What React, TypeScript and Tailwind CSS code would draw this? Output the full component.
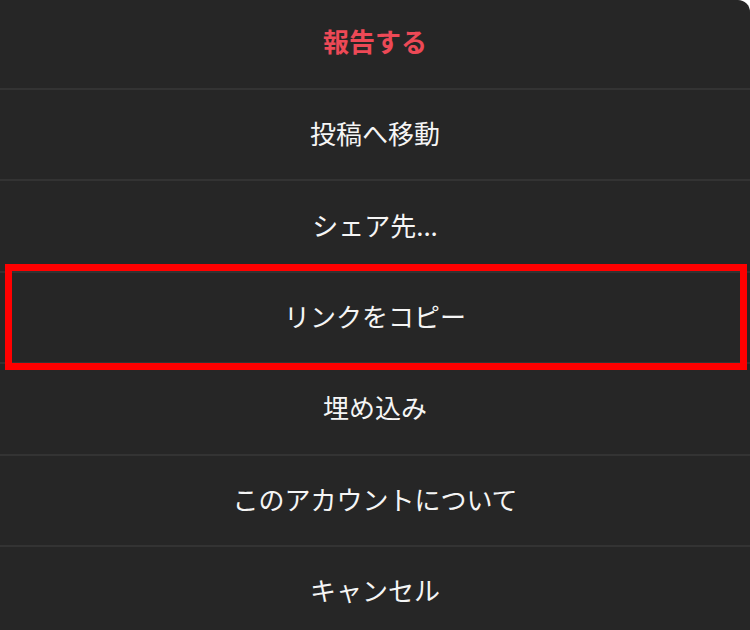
import React from "react";

const items = [
  "投稿へ移動",
  "シェア先...",
  "リンクをコピー",
  "埋め込み",
  "このアカウントについて",
  "キャンセル",
];

export default function App() {
  return (
    <div
      className="relative w-[750px] h-[630px] overflow-hidden bg-[#262626] rounded-tr-xl"
      style={{ fontFamily: '"Noto Sans CJK JP", "Noto Sans", sans-serif' }}
    >
      <div className="flex flex-col">
        <div className="h-[88px] pb-[8px] flex items-center justify-center text-[26px] font-bold text-[#ed4956]">
          報告する
        </div>
        {items.map((t) => (
          <div
            key={t}
            className="h-[91.4px] shrink-0 pb-[4px] border-t-2 border-[#333333] flex items-center justify-center text-[26px] text-[#f5f5f5]"
          >
            {t}
          </div>
        ))}
      </div>
      <div className="absolute left-[5px] top-[264px] w-[742px] h-[106px] border-[7px] border-[#ff0000]" />
    </div>
  );
}
